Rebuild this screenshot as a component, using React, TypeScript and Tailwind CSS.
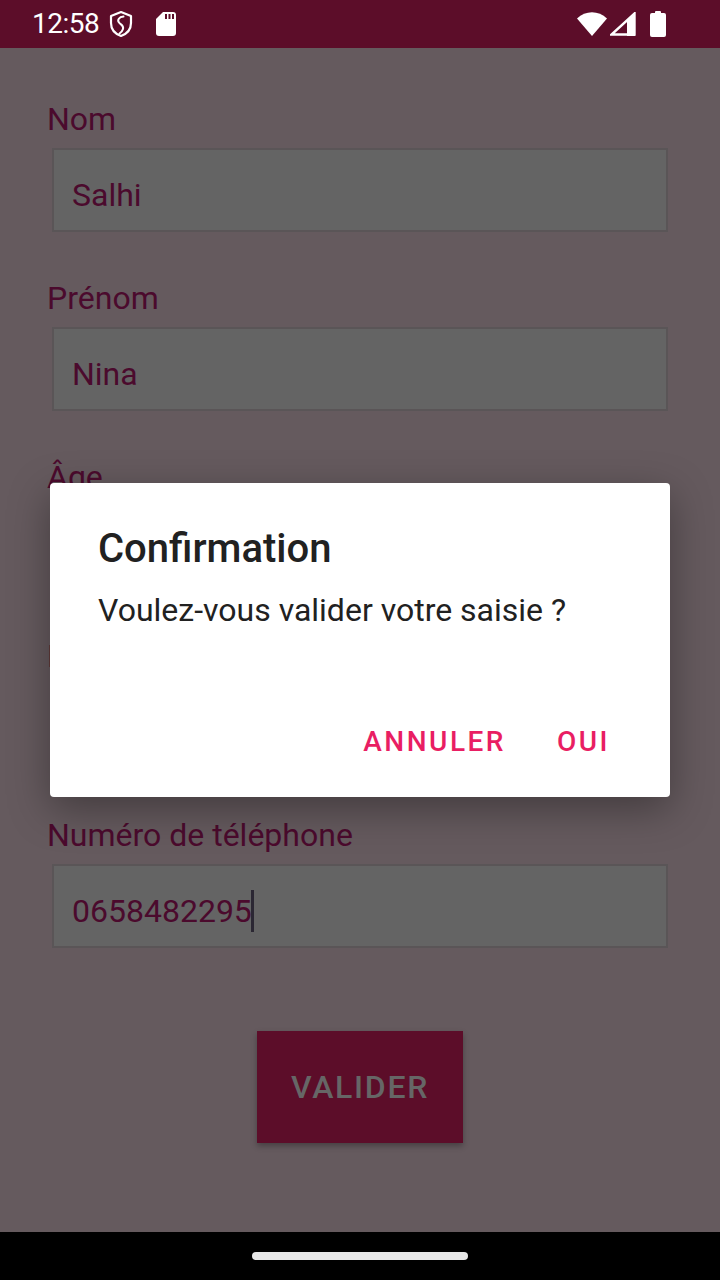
import React from "react";

const font = { fontFamily: "Roboto, 'Noto Sans', sans-serif" };

function StatusBar() {
  return (
    <div className="h-[48px] bg-[#5c0d29] flex items-center justify-between pl-[32px] pr-[54px] text-white">
      <div className="flex items-center">
        <span className="text-[28px] leading-none tracking-[-0.5px]">12:58</span>
        {/* shield */}
        <svg width="26" height="28" viewBox="0 0 26 28" className="ml-[9px]">
          <path
            d="M13 2 L23 6 V13 C23 19.5 18.5 24 13 26 C7.5 24 3 19.5 3 13 V6 Z"
            fill="none"
            stroke="white"
            strokeWidth="2.2"
            strokeLinejoin="round"
          />
          <path
            d="M15.5 6.5 C11 7 9 10 11 12.5 C13 15 16 15.5 15 19 C14.4 21 13 22.5 11.5 23.5"
            fill="none"
            stroke="white"
            strokeWidth="2"
            strokeLinecap="round"
          />
        </svg>
        {/* sd card */}
        <svg width="20" height="24" viewBox="0 0 20 24" className="ml-[22px]">
          <path d="M7 0 H17 Q20 0 20 3 V21 Q20 24 17 24 H3 Q0 24 0 21 V7 Z" fill="white" />
          <rect x="9" y="2" width="2" height="5" fill="#5c0d29" />
          <rect x="12.5" y="2" width="2" height="5" fill="#5c0d29" />
          <rect x="16" y="2" width="2" height="5" fill="#5c0d29" />
        </svg>
      </div>
      <div className="flex items-center">
        {/* wifi */}
        <svg width="30" height="24" viewBox="0 0 30 24">
          <path d="M0 6.5 C8.5 -2 21.5 -2 30 6.5 L15 24 Z" fill="white" />
        </svg>
        {/* signal */}
        <svg width="26" height="24" viewBox="0 0 26 24" className="ml-[3px]">
          <path d="M24.5 1.5 V22.5 H1.5 Z" fill="none" stroke="white" strokeWidth="2.4" strokeLinejoin="miter" />
          <path d="M17 9 L25 0 V24 H17 Z" fill="white" />
        </svg>
        {/* battery */}
        <svg width="16" height="26" viewBox="0 0 16 26" className="ml-[14px]">
          <rect x="5" y="0" width="6" height="3" rx="1" fill="white" />
          <rect x="0" y="2" width="16" height="24" rx="2" fill="white" />
        </svg>
      </div>
    </div>
  );
}

function Field({ label, value, caret }: { label: string; value: string; caret?: boolean }) {
  return (
    <div className="mb-[47px]">
      <div className="pl-[47px] text-[32px] leading-[38px] text-[#4b0a2d]">{label}</div>
      <div className="mt-[10px] mx-[52px] h-[84px] bg-[#646464] border-2 border-[#5a5557] flex items-center pl-[18px] pt-[10px]">
        <span className="text-[32px] leading-[38px] text-[#4b0a2d]">{value}</span>
        {caret && <span className="w-[3px] h-[42px] bg-[#2b2733] ml-[-1px]" />}
      </div>
    </div>
  );
}

function Dialog() {
  return (
    <div className="absolute left-[50px] top-[483px] w-[620px] h-[314px] bg-white rounded-[4px] shadow-[0_12px_40px_rgba(0,0,0,0.35)] flex flex-col">
      <div className="pl-[48px] pt-[42px] text-[40px] leading-[48px] font-medium text-[#212121]">
        Confirmation
      </div>
      <div className="pl-[48px] mt-[18px] text-[32px] leading-[38px] text-[#212121]">
        Voulez-vous valider votre saisie ?
      </div>
      <div className="mt-auto mb-[37px] flex justify-end items-center gap-[51px] pr-[60px]">
        <span className="text-[28px] leading-[36px] font-medium tracking-[2.5px] text-[#e91e63]">ANNULER</span>
        <span className="text-[28px] leading-[36px] font-medium tracking-[2.5px] text-[#e91e63]">OUI</span>
      </div>
    </div>
  );
}

export default function App() {
  return (
    <div className="relative w-[720px] h-[1280px] bg-[#655a5e] flex flex-col overflow-hidden" style={font}>
      <StatusBar />
      <div className="flex-1 flex flex-col pt-[52px]">
        <Field label="Nom" value="Salhi" />
        <Field label="Prénom" value="Nina" />
        <Field label="Âge" value="22" />
        <Field label="Email" value="nina.salhi@mail.com" />
        <Field label="Numéro de téléphone" value="0658482295" caret />
        <div className="flex justify-center mt-[36px]">
          <div className="w-[206px] h-[112px] bg-[#5c0d29] shadow-[0_3px_6px_rgba(0,0,0,0.3)] flex items-center justify-center">
            <span className="text-[32px] font-medium text-[#666666] tracking-[1.7px]">VALIDER</span>
          </div>
        </div>
      </div>
      <div className="h-[48px] bg-black flex items-center justify-center">
        <div className="w-[216px] h-[8px] rounded-full bg-[#e8e8e8]" />
      </div>
      <Dialog />
    </div>
  );
}
